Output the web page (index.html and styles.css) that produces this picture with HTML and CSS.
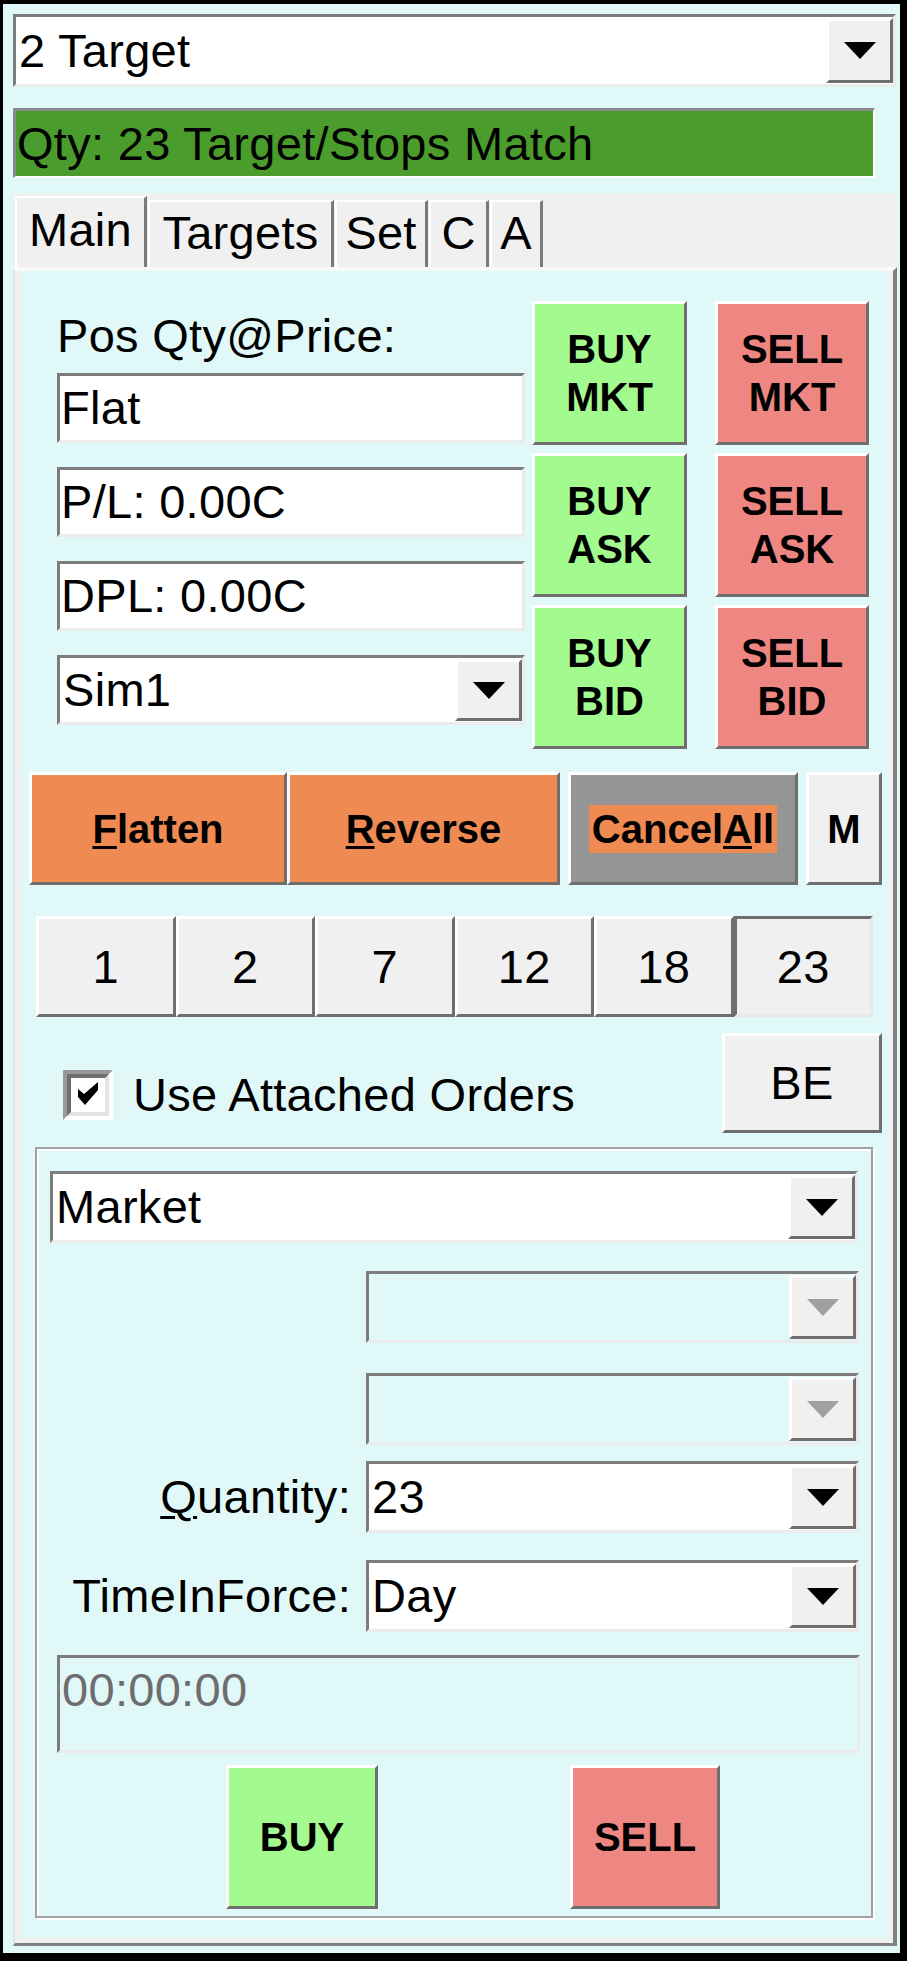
FILE: index.html
```html
<!DOCTYPE html>
<html>
<head>
<meta charset="utf-8">
<link rel="stylesheet" href="styles.css">
</head>
<body>
<div class="window">
  <div class="combo combo--top">
    <span class="combo-text">2 Target</span>
    <span class="combo-btn"><span class="arrow"></span></span>
  </div>
  <div class="status">Qty: 23 Target/Stops Match</div>
  <div class="tabs">
    <div class="tab tab--active tab--main">Main</div>
    <div class="tab tab--targets">Targets</div>
    <div class="tab tab--set">Set</div>
    <div class="tab tab--c">C</div>
    <div class="tab tab--a">A</div>
  </div>
  <div class="panel">
    <div class="trade">
      <div class="fields">
        <div class="field-label">Pos Qty@Price:</div>
        <div class="textbox">Flat</div>
        <div class="textbox">P/L: 0.00C</div>
        <div class="textbox">DPL: 0.00C</div>
        <div class="combo combo--acct">
          <span class="combo-text">Sim1</span>
          <span class="combo-btn"><span class="arrow"></span></span>
        </div>
      </div>
      <div class="btn-col btn-col--buy">
        <div class="btn btn--bold btn--buy">BUY<br>MKT</div>
        <div class="btn btn--bold btn--buy">BUY<br>ASK</div>
        <div class="btn btn--bold btn--buy">BUY<br>BID</div>
      </div>
      <div class="btn-col btn-col--sell">
        <div class="btn btn--bold btn--sell">SELL<br>MKT</div>
        <div class="btn btn--bold btn--sell">SELL<br>ASK</div>
        <div class="btn btn--bold btn--sell">SELL<br>BID</div>
      </div>
    </div>

    <div class="actions">
      <div class="btn btn--bold btn--orange btn--flatten"><span><u>F</u>latten</span></div>
      <div class="btn btn--bold btn--orange btn--reverse"><span><u>R</u>everse</span></div>
      <div class="btn btn--bold btn--cancel"><span class="cancel-label">Cancel<u>A</u>ll</span></div>
      <div class="btn btn--bold btn--m">M</div>
    </div>

    <div class="qty">
      <div class="btn">1</div>
      <div class="btn">2</div>
      <div class="btn">7</div>
      <div class="btn">12</div>
      <div class="btn">18</div>
      <div class="btn btn--pressed">23</div>
    </div>

    <div class="check-row">
      <div class="check-label">
        <span class="check"><span class="check-inner"><svg width="34" height="34" viewBox="0 0 34 34"><polygon points="7,11 13,16 27,4 27,12 14,27 7,19" fill="#000"/></svg></span></span>
        <span>Use Attached Orders</span>
      </div>
      <div class="btn btn--be">BE</div>
    </div>

    <div class="group">
      <div class="combo combo--order">
        <span class="combo-text">Market</span>
        <span class="combo-btn"><span class="arrow"></span></span>
      </div>
      <div class="row row--d1">
        <span class="row-label"></span>
        <div class="combo combo--disabled">
          <span class="combo-text"></span>
          <span class="combo-btn"><span class="arrow"></span></span>
        </div>
      </div>
      <div class="row row--d2">
        <span class="row-label"></span>
        <div class="combo combo--disabled">
          <span class="combo-text"></span>
          <span class="combo-btn"><span class="arrow"></span></span>
        </div>
      </div>
      <div class="row row--qty">
        <span class="row-label"><u>Q</u>uantity:</span>
        <div class="combo">
          <span class="combo-text">23</span>
          <span class="combo-btn"><span class="arrow"></span></span>
        </div>
      </div>
      <div class="row row--tif">
        <span class="row-label">TimeInForce:</span>
        <div class="combo">
          <span class="combo-text">Day</span>
          <span class="combo-btn"><span class="arrow"></span></span>
        </div>
      </div>
      <div class="timebox">00:00:00</div>
      <div class="order-btns">
        <div class="btn btn--bold btn--buy btn--order-buy">BUY</div>
        <div class="btn btn--bold btn--sell btn--order-sell">SELL</div>
      </div>
    </div>
  </div>
</div>
</body>
</html>
```

FILE: styles.css
```css
* { box-sizing: border-box; }

body {
  margin: 0;
  background: #000;
  font-family: "Liberation Sans", Arial, sans-serif;
  font-size: 47px;
  line-height: 52px;
  letter-spacing: 0.3px;
  color: #000;
}

.window {
  margin: 4px 7px 0 3px;
  height: 1949px;
  background: #e0f8f8;
  padding: 10px 0 0 10px;
}

/* combo boxes */
.combo {
  display: flex;
  align-items: center;
  height: 72px;
  border: 3px solid;
  border-color: #7c7c7c #ebebeb #ebebeb #7c7c7c;
  background: #fff;
}
.combo-text {
  flex: 1;
  padding-left: 3px;
  white-space: nowrap;
  overflow: hidden;
}
.combo-btn {
  align-self: stretch;
  width: 67px;
  margin: 1px 0;
  background: #f0f0f0;
  border: 3px solid;
  border-color: #fff #6e6e6e #6e6e6e #fff;
  display: flex;
  align-items: center;
  justify-content: center;
}
.arrow {
  width: 0;
  height: 0;
  border-left: 16px solid transparent;
  border-right: 16px solid transparent;
  border-top: 17px solid #000;
}
.combo--disabled { background: transparent; }
.combo--disabled .arrow { border-top-color: #a0a0a0; }
.combo--top { width: 883px; height: 73px; }

/* status bar */
.status {
  margin-top: 21px;
  width: 862px;
  height: 70px;
  background: #4a9c2c;
  border-style: solid;
  border-width: 3px 2px 2px 3px;
  border-color: #8a8a8a #fff #fff #8a8a8a;
  display: flex;
  align-items: center;
  padding-left: 1px;
  white-space: nowrap;
}

/* tabs */
.tabs {
  margin-top: 16px;
  width: 884px;
  height: 73px;
  background: #f0f0f0;
  display: flex;
  align-items: flex-end;
  gap: 1px;
  padding-left: 2px;
}
.tab {
  height: 67px;
  background: #f0f0f0;
  border-style: solid;
  border-width: 2px 3px 0 2px;
  border-color: #fff #7a7a7a #fff #fff;
  text-align: center;
  padding-top: 5px;
}
.tab--active { height: 71px; padding-top: 6px; }
.tab--main { width: 132px; }
.tab--targets { width: 186px; }
.tab--set { width: 93px; }
.tab--c { width: 60px; }
.tab--a { width: 53px; }

/* tab page */
.panel {
  width: 884px;
  height: 1679px;
  border-style: solid;
  border-width: 4px 4px 3px 2px;
  border-color: #fafafa #808080 #808080 #e3e3e3;
  box-shadow: inset 6px 0 0 #f0f0f0, inset -5px -5px 0 #f0f0f0;
  padding-top: 30px;
}

.trade {
  display: flex;
  margin-left: 42px;
}
.fields { width: 468px; }
.field-label {
  margin-top: 9px;
  height: 52px;
  white-space: nowrap;
}
.textbox {
  height: 70px;
  margin-top: 24px;
  border: 3px solid;
  border-color: #7c7c7c #ebebeb #ebebeb #7c7c7c;
  background: #fff;
  display: flex;
  align-items: center;
  padding-left: 1px;
  white-space: nowrap;
}
.field-label + .textbox { margin-top: 11px; }
.combo--acct { margin-top: 24px; height: 70px; }

.btn-col {
  display: flex;
  flex-direction: column;
  gap: 8px;
}
.btn-col--buy { margin-left: 7px; width: 155px; }
.btn-col--sell { margin-left: 28px; width: 154px; }
.btn-col .btn { height: 144px; }

.btn {
  border: 3px solid;
  border-color: #fff #6e6e6e #6e6e6e #fff;
  background: #f0f0f0;
  display: flex;
  align-items: center;
  justify-content: center;
  text-align: center;
  white-space: nowrap;
}
.btn--bold {
  font-weight: bold;
  font-size: 40px;
  line-height: 48px;
  letter-spacing: 0;
}
.btn--buy { background: #a3fa8e; }
.btn--sell { background: #ee8681; }
.btn--orange { background: #ee8a52; }
.btn--pressed { border-color: #6e6e6e #e8e8e8 #e8e8e8 #6e6e6e; }

u {
  text-decoration-thickness: 3px;
  text-underline-offset: 3px;
}

/* action row */
.actions {
  display: flex;
  margin: 23px 0 0 14px;
  height: 113px;
}
.btn--flatten { width: 258px; }
.btn--reverse { width: 273px; }
.btn--cancel { width: 230px; margin-left: 8px; background: #959595; }
.cancel-label {
  background: #ee8a52;
  padding: 0 3px;
  line-height: 48px;
}
.btn--m { width: 76px; margin-left: 8px; }

/* quantity buttons */
.qty {
  display: grid;
  grid-template-columns: repeat(6, 1fr);
  width: 837px;
  height: 101px;
  margin: 31px 0 0 21px;
}

/* attached orders row */
.check-row {
  display: flex;
  align-items: flex-start;
  margin-top: 16px;
  height: 100px;
}
.check-label {
  display: flex;
  align-items: center;
  gap: 20px;
  margin: 36px 0 0 48px;
  white-space: nowrap;
}
.check {
  display: block;
  width: 50px;
  height: 50px;
  border: 4px solid;
  border-color: #999 #fff #fff #999;
}
.check-inner {
  display: block;
  width: 42px;
  height: 42px;
  border: 4px solid;
  border-color: #6e6e6e #e3e3e3 #e3e3e3 #6e6e6e;
  background: #fff;
}
.check-inner svg { display: block; }
.btn--be {
  width: 160px;
  height: 100px;
  margin-left: auto;
  margin-right: 11px;
}

/* order group */
.group {
  margin: 14px 0 0 20px;
  width: 838px;
  height: 771px;
  border: 2px solid #a0a0a0;
  box-shadow: inset 2px 2px 0 #fff, 2px 2px 0 #fff;
  padding-top: 22px;
}
.combo--order { margin-left: 13px; width: 808px; }
.row {
  display: grid;
  grid-template-columns: 314px 493px;
  column-gap: 15px;
  align-items: center;
}
.row-label {
  text-align: right;
  white-space: nowrap;
}
.row--d1 { margin-top: 28px; }
.row--d2 { margin-top: 30px; }
.row--qty { margin-top: 16px; }
.row--tif { margin-top: 27px; }

.timebox {
  margin: 23px 0 0 20px;
  width: 803px;
  height: 98px;
  border: 3px solid;
  border-color: #7c7c7c #ebebeb #ebebeb #7c7c7c;
  color: #6d6d6d;
  padding: 6px 0 0 2px;
}

.order-btns {
  display: flex;
  margin-top: 12px;
}
.btn--order-buy { width: 152px; height: 144px; margin-left: 189px; }
.btn--order-sell { width: 150px; height: 144px; margin-left: 192px; }
```
